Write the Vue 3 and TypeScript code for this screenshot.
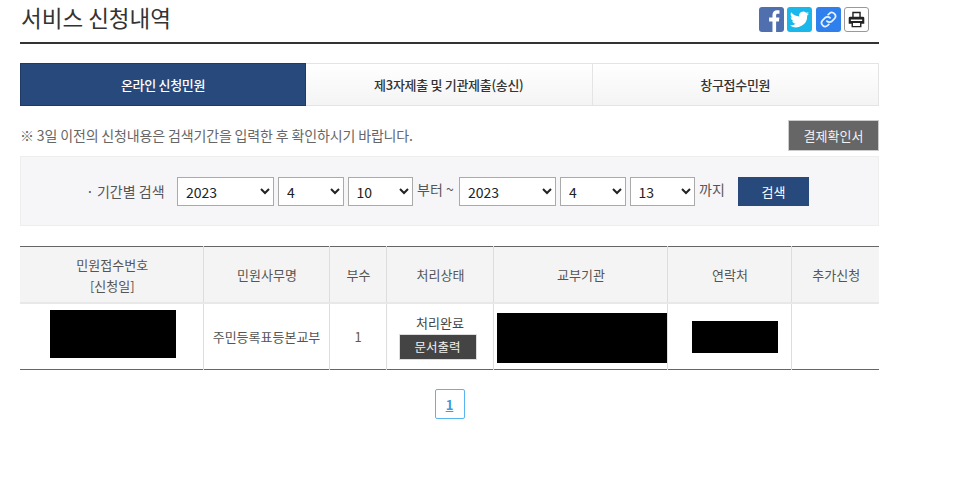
<script setup lang="ts">
const tabs = ['온라인 신청민원', '제3자제출 및 기관제출(송신)', '창구접수민원']
const heads = [['민원접수번호', '[신청일]'], ['민원사무명'], ['부수'], ['처리상태'], ['교부기관'], ['연락처'], ['추가신청']]
const from = { y: '2023', m: '4', d: '10' }
const to = { y: '2023', m: '4', d: '13' }
</script>

<template>
  <div class="page">
    <header class="top">
      <h1>서비스 신청내역</h1>
      <div class="share">
        <span class="ic fb"><svg viewBox="0 0 26 26" width="25" height="25"><path fill="#fff" d="M14 26V15h-3.500v-4H14V8.300C14 5.200 16 3.500 18.700 3.500c1.300 0 2.300.1 2.600.1v3.500h-1.800c-1.400 0-1.700.7-1.700 1.700V11h3.400l-.5 4h-2.900v11z"/></svg></span>
        <span class="ic tw"><svg viewBox="0 0 24 24" width="21" height="21"><path fill="#fff" d="M23 5.100c-.8.400-1.700.6-2.600.7.900-.6 1.600-1.400 2-2.500-.9.500-1.800.9-2.900 1.100A4.500 4.500 0 0 0 11.800 8.500C8 8.300 4.700 6.500 2.500 3.700 1.300 5.800 1.900 8.400 3.900 9.800c-.7 0-1.400-.2-2-.6 0 2.200 1.500 4 3.600 4.500-.7.200-1.400.2-2 .1.600 1.800 2.200 3.100 4.200 3.100A9.100 9.100 0 0 1 1 18.800 12.800 12.800 0 0 0 20.800 7.400c.9-.6 1.600-1.400 2.200-2.300z"/></svg></span>
        <span class="ic lk"><svg viewBox="0 0 24 24" width="19" height="19" fill="none" stroke="#e8f1ff" stroke-width="2.200" stroke-linecap="round"><path d="M10 14a4.500 4.500 0 0 0 6.500 0l3-3A4.600 4.600 0 0 0 13 4.500l-1.500 1.500"/><path d="M14 10a4.500 4.500 0 0 0-6.500 0l-3 3a4.600 4.600 0 0 0 6.500 6.500l1.500-1.500"/></svg></span>
        <span class="ic pr"><svg viewBox="0 0 24 24" width="17" height="17"><path fill="#222" fill-rule="evenodd" d="M6 1h12v7h3a2 2 0 0 1 2 2v8h-4v5H5v-5H1v-8a2 2 0 0 1 2-2h3zM8 3v5h8V3zM4 12v2h16v-2zM7 17v4h10v-4z"/></svg></span>
      </div>
    </header>

    <nav class="tabs">
      <a v-for="(t, i) in tabs" :key="t" class="tab" :class="{ on: i === 0 }">{{ t }}</a>
    </nav>

    <div class="notice">
      <p>※ 3일 이전의 신청내용은 검색기간을 입력한 후 확인하시기 바랍니다.</p>
      <button class="pay">결제확인서</button>
    </div>

    <div class="search">
      <span class="lbl">· 기간별 검색</span>
      <select class="yr"><option>{{ from.y }}</option></select>
      <select class="sm"><option>{{ from.m }}</option></select>
      <select class="sm"><option>{{ from.d }}</option></select>
      <span class="txt">부터 ~</span>
      <select class="yr"><option>{{ to.y }}</option></select>
      <select class="sm"><option>{{ to.m }}</option></select>
      <select class="sm"><option>{{ to.d }}</option></select>
      <span class="txt until">까지</span>
      <button class="go">검색</button>
    </div>

    <table>
      <colgroup>
        <col style="width:183px" /><col style="width:126px" /><col style="width:57px" /><col style="width:107px" /><col style="width:174px" /><col style="width:124px" /><col style="width:88px" />
      </colgroup>
      <thead>
        <tr>
          <th v-for="h in heads" :key="h[0]"><template v-for="(l, i) in h" :key="l"><br v-if="i" />{{ l }}</template></th>
        </tr>
      </thead>
      <tbody>
        <tr>
          <td><div class="black b1"></div></td>
          <td>주민등록표등본교부</td>
          <td class="num">1</td>
          <td>
            <div class="state">처리완료</div>
            <button class="doc">문서출력</button>
          </td>
          <td><div class="black b2"></div></td>
          <td><div class="black b3"></div></td>
          <td></td>
        </tr>
      </tbody>
    </table>

    <div class="pager"><a class="cur">1</a></div>
  </div>
</template>

<style>
html, body { margin: 0; background: #fff; }
</style>

<style scoped>
.page {
  width: 859px;
  margin-left: 20px;
  padding-bottom: 63px;
  font-family: "Noto Sans CJK KR", "Liberation Sans", sans-serif;
  font-size: 13px;
  color: #555;
}
.top {
  height: 42px;
  border-bottom: 2px solid #333;
  display: flex;
  justify-content: space-between;
  align-items: flex-start;
}
h1 {
  margin: 0 0 0 1px;
  font-size: 22.500px;
  font-weight: 400;
  line-height: 34px;
  color: #333;
}
.share { display: flex; gap: 3.300px; margin-top: 7px; margin-right: 10px; }
.ic {
  width: 25px;
  height: 25px;
  border-radius: 3px;
  display: flex;
  align-items: center;
  justify-content: center;
  overflow: hidden;
}
.fb { background: #4f6fae; }
.tw { background: #1ab7ea; }
.lk { background: #2f80ed; }
.pr { box-sizing: border-box; background: #fff; border: 1px solid #999; }
.tabs {
  display: flex;
  margin-top: 19px;
  height: 43px;
}
.tab {
  box-sizing: border-box;
  flex: 1;
  display: flex;
  align-items: center;
  justify-content: center;
  background: linear-gradient(#fff, #f4f4f4);
  border: 1px solid #e4e4e4;
  border-left: 0;
  color: #333;
  font-size: 13px;
  font-weight: 500;
  letter-spacing: -0.300px;
}
.tab.on {
  flex: 0 0 286px;
  background: #28497c;
  border: 1px solid #1f3a66;
  color: #fff;
}
.notice {
  display: flex;
  justify-content: space-between;
  align-items: center;
  margin-top: 14px;
  height: 31px;
}
.notice p { margin: 0 0 2px; font-size: 14px; letter-spacing: -0.150px; color: #666; }
.pay {
  width: 91px;
  height: 31px;
  border: 1px solid #ccc;
  background: #666;
  color: #f2f2f2;
  font: inherit;
  font-size: 13px;
  padding: 0;
}
.search {
  box-sizing: border-box;
  height: 70px;
  margin-top: 5px;
  background: #f6f6f9;
  border: 1px solid #eee;
  display: flex;
  align-items: center;
  padding-left: 65px;
}
.lbl { width: 91px; font-size: 14px; color: #555; white-space: nowrap; }
select {
  box-sizing: border-box;
  height: 29px;
  font-family: "Noto Sans CJK KR", "Liberation Sans", sans-serif;
  font-size: 14px;
  color: #222;
  background: #fff;
  border: 1px solid #aaa;
  padding-left: 4px;
  margin-right: 4px;
  margin-top: 1px;
}
.yr { width: 97px; }
.sm { width: 65.500px; }
.txt { width: 38px; margin-right: 4px; margin-bottom: 4px; font-size: 14px; white-space: nowrap; }
.until { width: 25px; margin-right: 14px; }
.go {
  width: 71px;
  height: 29px;
  margin-top: 1px;
  border: 0;
  background: #28497c;
  color: #fff;
  font: inherit;
  font-size: 13px;
  padding: 0;
}
table {
  width: 859px;
  margin-top: 20px;
  border-collapse: collapse;
  table-layout: fixed;
  border-top: 1px solid #666;
  border-bottom: 1px solid #666;
}
th {
  height: 55px;
  padding: 0 0 0 2px;
  background: #f4f4f4;
  font-weight: 400;
  line-height: 21px;
  color: #555;
  border-left: 1px solid #ddd;
  border-bottom: 2px solid #e8e8e8;
  font-size: 13px;
}
td {
  height: 65px;
  padding: 0 0 0 1px;
  text-align: center;
  border-left: 1px solid #ddd;
  font-size: 13px;
  color: #555;
}
th:first-child, td:first-child { border-left: 0; }
.num { color: #6b5a35; }
.state { color: #444; line-height: 18px; margin-bottom: 2px; }
.doc {
  width: 78px;
  height: 26px;
  border: 1px solid #ddd;
  background: #444;
  color: #f2f2f2;
  font: inherit;
  font-size: 12.500px;
  padding: 0;
  display: block;
  margin: 0 0 0 11px;
}
.black { background: #000; }
.b1 { width: 126px; height: 48px; margin: 0 0 6px 29px; }
.b2 { width: 170px; height: 50px; margin: 2px 0 0 2px; }
.b3 { width: 86px; height: 32px; margin: 0 0 0 23px; }
.pager {
  display: flex;
  justify-content: center;
  margin-top: 19px;
}
.cur {
  box-sizing: border-box;
  width: 30px;
  height: 30px;
  border: 1px solid #5ab4f0;
  border-radius: 2px;
  display: flex;
  align-items: center;
  justify-content: center;
  color: #3b9be0;
  font-weight: 700;
  font-size: 13px;
  text-decoration: underline;
}
</style>
